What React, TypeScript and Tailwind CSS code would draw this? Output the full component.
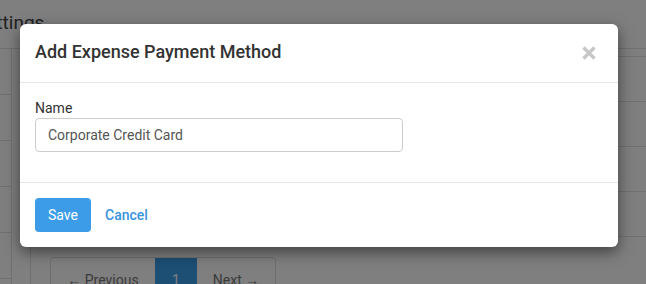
import React from "react";

export default function App() {
  const leftRows = [0, 1, 2, 3, 4];
  return (
    <div className="relative w-[646px] h-[284px] overflow-hidden bg-white font-['Roboto',sans-serif] text-[#333]">
      {/* background page */}
      <div className="flex flex-col">
        <div className="h-[48px] pt-[9px] pl-0">
          <h1 className="ml-[-25px] text-[19px] leading-[28px] text-[#444]">Settings</h1>
        </div>
        <div className="flex border-t border-[#e0e0e0]">
          <div className="w-[12px] border-r border-[#e0e0e0] flex flex-col">
            {leftRows.map((r) => (
              <div key={r} className="h-[46px] border-b border-[#e0e0e0]" />
            ))}
          </div>
          <div className="w-[19px] border-r border-[#e0e0e0] mt-[185px]" />
          <div className="flex-1 flex flex-col">
            <div className="h-[8px] border-b border-[#e0e0e0]" />
            <div className="h-[45px] border-b border-[#e0e0e0]" />
            <div className="h-[45px] border-b border-[#e0e0e0]" />
            <div className="h-[45px] border-b border-[#e0e0e0]" />
            <div className="h-[45px] border-b border-[#e0e0e0]" />
            <div className="pl-[19px] pt-[20px]">
              <div className="flex w-[226px] h-[40px] border border-[#ddd] rounded-[4px] text-[14px] text-[#777]">
                <div className="w-[104px] flex items-center justify-center pt-[6px]">← Previous</div>
                <div className="w-[42px] bg-[#3b9de8] text-white flex items-center justify-center pt-[6px]">1</div>
                <div className="flex-1 flex items-center justify-center pt-[6px]">Next →</div>
              </div>
            </div>
          </div>
        </div>
      </div>

      {/* overlay */}
      <div className="absolute inset-0 bg-black/50" />

      {/* modal */}
      <div className="absolute left-[20px] top-[24px] w-[598px] bg-white rounded-[6px] shadow-[0_5px_15px_rgba(0,0,0,0.5)]">
        <div className="flex items-center justify-between px-[15px] pt-[15px] pb-[17px] border-b border-[#e5e5e5]">
          <h4 className="text-[18px] leading-[26px] font-medium text-[#333]">Add Expense Payment Method</h4>
          <button className="text-[#c6c6c6] mr-[7px] mt-[2px]">
            <svg width="14" height="14" viewBox="0 0 14 14">
              <path d="M1.5 1.5 L12.5 12.5 M12.5 1.5 L1.5 12.5" stroke="currentColor" strokeWidth="3.2" strokeLinecap="butt" />
            </svg>
          </button>
        </div>
        <div className="p-[15px]">
          <div className="mb-[15px]">
            <label className="block text-[14px] leading-[20px] text-[#333]">Name</label>
            <div className="w-[368px] h-[34px] border border-[#ccc] rounded-[4px] px-[12px] flex items-center text-[14px] text-[#555]">
              Corporate Credit Card
            </div>
          </div>
        </div>
        <div className="flex items-center gap-[2px] p-[15px] border-t border-[#e5e5e5]">
          <button className="h-[34px] w-[56px] rounded-[4px] bg-[#3c9ce8] text-white text-[14px]">Save</button>
          <button className="h-[34px] px-[12px] text-[#3a93de] text-[14px] font-medium">Cancel</button>
        </div>
      </div>
    </div>
  );
}
